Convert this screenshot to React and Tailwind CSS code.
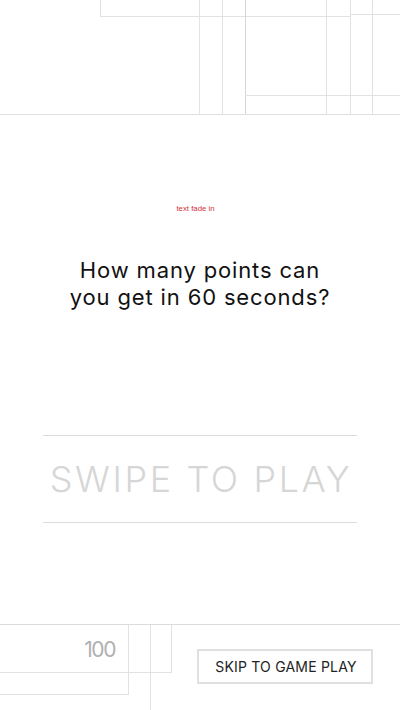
export default function App() {
  const stack = "[grid-area:1/1]";
  return (
    <div className="w-[400px] h-[710px] bg-white overflow-hidden flex flex-col font-['Inter',sans-serif]">
      {/* decorative header grid, layers stacked in one grid cell */}
      <div className="grid h-[115px] shrink-0 border-b border-[#e0e0e0]">
        <div className={`${stack} self-start ml-[100px] w-[251px] h-[17px] border-l border-b border-[#e2e2e2]`} />
        <div className={`${stack} flex h-full pl-[199px]`}>
          <div className="w-[23px] border-l border-[#e4e4e4]" />
          <div className="w-[23px] border-l border-[#e2e2e2]" />
          <div className="w-[81px] border-l border-[#d6d6d6]" />
          <div className="w-[24px] border-l border-[#e2e2e2]" />
          <div className="w-[22px] border-l border-[#e2e2e2]" />
          <div className="w-[28px] border-l border-[#e2e2e2]" />
        </div>
        <div className={`${stack} self-start ml-[350px] mt-[14px] w-[50px] border-t border-[#e2e2e2]`} />
        <div className={`${stack} self-start ml-[245px] mt-[95px] w-[155px] border-t border-[#e2e2e2]`} />
      </div>

      {/* main */}
      <div className="flex-1 flex flex-col items-center">
        <div className="mt-[88px] mr-[9px] text-[7.8px] leading-[12px] text-[#d2323c] font-['Liberation_Sans',sans-serif]">
          text fade in
        </div>
        <div className="mt-[42px] text-center text-[22px] leading-[27px] text-[#111] font-normal tracking-[0.85px]">
          How many points can
          <br />
          you get in 60 seconds?
        </div>
        <div className="mt-[124px] w-[314px] border-y border-[#dcdcdc] h-[88px] flex items-center justify-center">
          <span className="text-[36px] leading-none text-[#d6d6d6] font-light tracking-[2.6px] ml-[2px]">
            SWIPE TO PLAY
          </span>
        </div>
      </div>

      {/* footer */}
      <div className="flex h-[86px] shrink-0 border-t border-[#dcdcdc]">
        <div className="grid w-[172px] shrink-0">
          <div className={`${stack} self-start w-[172px] h-[48px] border-r border-b border-[#e2e2e2]`} />
          <div className={`${stack} self-start w-[129px] h-[70px] border-r border-b border-[#e2e2e2] flex justify-end items-start pr-[13px] pt-[13px]`}>
            <span className="text-[21px] leading-[24px] text-[#b0b0b0] tracking-[-1.4px]">100</span>
          </div>
          <div className={`${stack} ml-[150px] w-px h-full bg-[#e2e2e2]`} />
        </div>
        <div className="ml-[25px] mt-[24px] w-[176px] h-[35px] border-2 border-[#e0e0e0] flex items-center justify-center">
          <span className="text-[14px] leading-none text-[#222] tracking-[0.2px] ml-[2px]">SKIP TO GAME PLAY</span>
        </div>
      </div>
    </div>
  );
}
